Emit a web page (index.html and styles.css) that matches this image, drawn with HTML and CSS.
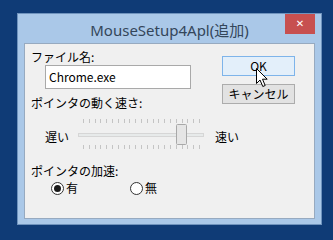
FILE: index.html
```html
<!DOCTYPE html>
<html lang="ja">
<head>
    <meta charset="UTF-8">
    <title>MouseSetup4Apl(追加)</title>
    <link rel="stylesheet" href="styles.css">
</head>
<body>
    <div class="window">
        <div class="titlebar">
            <span class="title">MouseSetup4Apl(追加)</span>
            <div class="close">✕</div>
        </div>
        <div class="content">
            <div class="top-row">
                <div class="form-col">
                    <div class="label">ファイル名:</div>
                    <div class="input">Chrome.exe</div>
                    <div class="label speed-label">ポインタの動く速さ:</div>
                </div>
                <div class="button-col">
                    <div class="button button-ok">OK</div>
                    <div class="button">キャンセル</div>
                </div>
            </div>

            <div class="slider-row">
                <span class="slider-label">遅い</span>
                <svg class="slider" width="132" height="34" viewBox="0 0 132 34">
                    <g id="ticks" stroke="#c4c4c4" stroke-width="1"></g>
                    <rect x="2.5" y="17.5" width="125" height="3" fill="#e7eaea" stroke="#d6d6d6"/>
                    <rect x="100.5" y="8.5" width="10" height="20" rx="1" fill="#e5e5e5" stroke="#a8a8a8"/>
                </svg>
                <span class="slider-label fast">速い</span>
            </div>

            <div class="label accel-label">ポインタの加速:</div>
            <div class="radio-row">
                <div class="radio-item">
                    <span class="radio checked"></span>
                    <span>有</span>
                </div>
                <div class="radio-item">
                    <span class="radio"></span>
                    <span>無</span>
                </div>
            </div>
        </div>
    </div>

    <!-- curseur de la souris, posé au-dessus du bouton OK -->
    <svg class="cursor" width="13" height="20" viewBox="0 0 13 20">
        <path d="M0.5 0.5 L0.5 15.5 L4 12 L6.8 18.5 L9.2 17.5 L6.5 11.2 L11.2 11.2 Z" fill="#fff" stroke="#000" stroke-width="1"/>
    </svg>

    <script>
        // Graduations du curseur de vitesse
        const ticks = document.getElementById("ticks");
        let lignes = "";
        for (let i = 0; i <= 20; i++) {
            const x = Math.round(7 + i * 5.8) + 0.5;
            lignes += `<line x1="${x}" y1="3" x2="${x}" y2="7"/>`;
            lignes += `<line x1="${x}" y1="29" x2="${x}" y2="33"/>`;
        }
        ticks.innerHTML = lignes;
    </script>
</body>
</html>
```

FILE: styles.css
```css
body {
    margin: 0;
    width: 333px;
    height: 240px;
    background-color: #0f3b76;
    font-family: "Noto Sans CJK JP", "Noto Sans", sans-serif;
    font-size: 12px;
    color: #000;
    overflow: hidden;
}

.window {
    box-sizing: border-box;
    width: 305px;
    height: 212px;
    margin: 13px 0 0 17px;
    border: 1px solid #6f93bd;
    background-color: #aac8e8;
    display: flex;
    flex-direction: column;
}

.titlebar {
    height: 29px;
    display: grid;
    grid-template-columns: 1fr auto 1fr;
}

.title {
    grid-column: 2;
    font-family: "Noto Sans", "Noto Sans CJK JP", sans-serif;
    font-size: 15px;
    line-height: 20px;
    padding-top: 6px;
    color: #34465a;
    white-space: nowrap;
}

.close {
    grid-column: 3;
    justify-self: end;
    width: 30px;
    height: 20px;
    margin-right: 6px;
    background-color: #c75050;
    color: #fff;
    font-family: "DejaVu Sans", sans-serif;
    font-size: 10px;
    font-weight: bold;
    line-height: 20px;
    text-align: center;
}

.content {
    flex: 1;
    margin: 0 6px 5px 6px;
    border: 1px solid #97aac0;
    background-color: #f0f0f0;
    padding-top: 5px;
}

.label {
    line-height: 16px;
    white-space: nowrap;
}

.top-row {
    display: flex;
}

.form-col {
    flex: 1;
    padding-left: 6px;
}

.input {
    box-sizing: border-box;
    width: 146px;
    height: 24px;
    margin-left: 14px;
    padding-left: 3px;
    border: 1px solid #a9a9a9;
    background-color: #fff;
    line-height: 22px;
}

.speed-label {
    margin-top: 6px;
}

.button-col {
    display: flex;
    flex-direction: column;
    gap: 8px;
    margin-top: 7px;
    margin-right: 19px;
}

.button {
    box-sizing: border-box;
    width: 73px;
    height: 20px;
    border: 1px solid #acacac;
    background-color: #e2e2e2;
    line-height: 18px;
    text-align: center;
}

.button-ok {
    border-color: #7eb4ea;
    background-color: #e3effa;
}

.slider-row {
    display: flex;
    align-items: flex-start;
    height: 34px;
    margin-top: 5px;
}

.slider-label {
    margin: 13px 0 0 20px;
    line-height: 16px;
}

.slider {
    display: block;
    margin-left: 7px;
}

.slider-label.fast {
    margin-left: 7px;
}

.accel-label {
    margin-top: 13px;
    padding-left: 6px;
}

.radio-row {
    display: flex;
    margin-top: 1px;
    padding-left: 26px;
    line-height: 16px;
}

.radio-item {
    display: flex;
    align-items: center;
    gap: 2px;
    width: 79px;
}

.radio {
    box-sizing: border-box;
    width: 13px;
    height: 13px;
    border: 1px solid #333;
    border-radius: 50%;
    background-color: #fff;
    display: flex;
    justify-content: center;
    align-items: center;
}

.radio.checked::after {
    content: "";
    width: 7px;
    height: 7px;
    border-radius: 50%;
    background-color: #1a1a1a;
}

.cursor {
    position: absolute;
    left: 256px;
    top: 68px;
}
```
